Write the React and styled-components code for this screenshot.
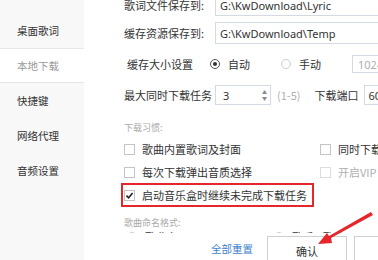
import React from "react";
import styled, { createGlobalStyle } from "styled-components";

const Global = createGlobalStyle`
  html, body { margin: 0; padding: 0; background: #fff; }
  body { width: 378px; height: 260px; overflow: hidden; font-family: "Noto Sans CJK SC", "Noto Sans", sans-serif; }
  #root { width: 378px; height: 260px; }
`;

const Page = styled.div`
  position: relative;
  display: flex;
  width: 378px;
  height: 260px;
  overflow: hidden;
  color: #333;
  font-size: 11px;
`;

const Sidebar = styled.div`
  width: 84px;
  flex: none;
  background: #f8f8f8;
  padding-top: 13px;
  box-sizing: border-box;
`;

const NavItem = styled.div`
  height: 35px;
  box-sizing: border-box;
  display: flex;
  align-items: center;
  padding-left: 17px;
  font-size: 10.5px;
  color: ${(p) => (p.$active ? "#9a9a9a" : "#333")};
  background: ${(p) => (p.$active ? "#fff" : "transparent")};
  border-top: 1px solid ${(p) => (p.$active ? "#e6e6e6" : "transparent")};
  border-bottom: 1px solid ${(p) => (p.$active ? "#e6e6e6" : "transparent")};
`;

const Main = styled.div`
  flex: 1;
  display: flex;
  flex-direction: column;
  min-width: 0;
`;

const Scroll = styled.div`
  height: 233px;
  overflow: hidden;
  flex: none;
`;

const Content = styled.div`
  margin-top: -6px;
  padding-left: 40px;
  display: flex;
  flex-direction: column;
`;

const Row = styled.div`
  display: flex;
  align-items: center;
  height: ${(p) => p.$h || 22}px;
  margin-top: ${(p) => p.$mt || 0}px;
  white-space: nowrap;
`;

const Label = styled.div`
  width: ${(p) => p.$w || 91}px;
  flex: none;
  padding-left: ${(p) => p.$indent || 0}px;
  box-sizing: border-box;
`;

const TextInput = styled.div`
  flex: none;
  width: ${(p) => p.$w}px;
  height: ${(p) => p.$h || 22}px;
  border: 1px solid #d3dae3;
  box-sizing: border-box;
  display: flex;
  align-items: center;
  padding-left: ${(p) => p.$pl || 4}px;
  color: ${(p) => (p.$muted ? "#b0b0b0" : "#333")};
  font-family: "Noto Sans", "Noto Sans CJK SC", sans-serif;
  font-size: 11px;
  position: relative;
  margin-left: ${(p) => p.$ml || 0}px;
`;

const Spin = styled.div`
  position: absolute;
  right: 3px;
  top: 3px;
  bottom: 3px;
  display: flex;
  flex-direction: column;
  justify-content: space-between;
  color: #888;
  font-size: 5px;
  line-height: 6px;
`;

const Radio = styled.span`
  width: 10px;
  height: 10px;
  border-radius: 50%;
  border: 1px solid ${(p) => (p.$on ? "#555" : "#ccc")};
  box-sizing: border-box;
  display: inline-flex;
  align-items: center;
  justify-content: center;
  flex: none;
  margin-left: ${(p) => p.$ml || 0}px;
  margin-right: ${(p) => p.$mr || 8}px;
  &::after {
    content: "";
    width: 4px;
    height: 4px;
    border-radius: 50%;
    background: ${(p) => (p.$on ? "#333" : "transparent")};
  }
`;

const OptText = styled.span`
  color: ${(p) => (p.$muted ? "#b0b0b0" : "#333")};
  margin-left: ${(p) => p.$ml || 0}px;
`;

const Section = styled.div`
  font-size: 9px;
  color: #aaa;
  height: 16px;
  display: flex;
  align-items: center;
  margin-top: ${(p) => p.$mt || 0}px;
`;

const CheckGrid = styled.div`
  display: grid;
  grid-template-columns: 196px auto;
  row-gap: 5px;
  margin-top: 5px;
`;

const CheckRow = styled.div`
  display: inline-flex;
  align-items: center;
  height: 18px;
  white-space: nowrap;
  justify-self: start;
  padding-right: ${(p) => (p.$hl ? 4 : 0)}px;
  outline: ${(p) => (p.$hl ? "2px solid #e5262a" : "none")};
  outline-offset: 1px;
  color: ${(p) => (p.$muted ? "#b0b0b0" : "#333")};
`;

const Box = styled.span`
  width: 11px;
  height: 11px;
  border: 1px solid ${(p) => (p.$muted ? "#ddd" : "#c4c4c4")};
  box-sizing: border-box;
  flex: none;
  margin-right: 7px;
  display: flex;
  align-items: center;
  justify-content: center;
  background: #fff;
`;

const Footer = styled.div`
  flex: 1;
  display: flex;
  align-items: flex-start;
  padding-top: 3px;
  padding-left: 127px;
  white-space: nowrap;
`;

const LinkText = styled.span`
  color: #3f7fd0;
  font-size: 10.5px;
  margin-top: 5px;
`;

const Button = styled.div`
  flex: none;
  width: 80px;
  height: 30px;
  border: 1px solid #cfcfcf;
  box-sizing: border-box;
  display: flex;
  align-items: center;
  justify-content: center;
  margin-left: ${(p) => p.$ml || 0}px;
  background: #fff;
  font-size: 11px;
  color: #333;
`;

const Arrow = styled.svg`
  position: absolute;
  left: 0;
  top: 0;
  pointer-events: none;
`;

const Check = () => (
  <svg width="9" height="9" viewBox="0 0 9 9">
    <path d="M1.5 4.6 L3.6 6.7 L7.6 2" fill="none" stroke="#222" strokeWidth="1.6" />
  </svg>
);

export default function App() {
  const nav = ["桌面歌词", "本地下载", "快捷键", "网络代理", "音频设置"];
  return (
    <>
      <Global />
      <Page>
        <Sidebar>
          {nav.map((n) => (
            <NavItem key={n} $active={n === "本地下载"}>
              {n}
            </NavItem>
          ))}
        </Sidebar>
        <Main>
          <Scroll>
            <Content>
              <Row>
                <Label>歌词文件保存到:</Label>
                <TextInput $w={170}>G:\KwDownload\Lyric</TextInput>
              </Row>
              <Row $mt={6}>
                <Label>缓存资源保存到:</Label>
                <TextInput $w={170}>G:\KwDownload\Temp</TextInput>
              </Row>
              <Row $mt={10} $h={20}>
                <Label $indent={3} $w={86}>缓存大小设置</Label>
                <Radio $on $mr={8} />
                <OptText>自动</OptText>
                <Radio $ml={31} $mr={8} />
                <OptText>手动</OptText>
                <TextInput $w={40} $h={18} $muted $ml={31} $pl={5}>1024</TextInput>
              </Row>
              <Row $mt={11} $h={20}>
                <Label>最大同时下载任务</Label>
                <TextInput $w={56} $h={20} $pl={7}>
                  3
                  <Spin>
                    <span>▲</span>
                    <span>▼</span>
                  </Spin>
                </TextInput>
                <OptText $muted $ml={6}>(1-5)</OptText>
                <OptText $ml={14}>下载端口</OptText>
                <TextInput $w={30} $h={20} $ml={6} $pl={3}>6000</TextInput>
              </Row>
              <Section $mt={14}>下载习惯:</Section>
              <CheckGrid>
                <CheckRow>
                  <Box />
                  歌曲内置歌词及封面
                </CheckRow>
                <CheckRow>
                  <Box />
                  同时下载歌词
                </CheckRow>
                <CheckRow>
                  <Box />
                  每次下载弹出音质选择
                </CheckRow>
                <CheckRow $muted>
                  <Box $muted />
                  开启VIP
                </CheckRow>
                <CheckRow $hl>
                  <Box>
                    <Check />
                  </Box>
                  启动音乐盒时继续未完成下载任务
                </CheckRow>
              </CheckGrid>
              <Section $mt={10}>歌曲命名格式:</Section>
              <Row $mt={-2} $h={18}>
                <Radio $ml={3} $mr={8} />
                <OptText>歌曲名</OptText>
                <Radio $ml={96} $mr={8} />
                <OptText>歌手 - 歌曲</OptText>
              </Row>
            </Content>
          </Scroll>
          <Footer>
            <LinkText>全部重置</LinkText>
            <Button $ml={14}>确认</Button>
            <Button $ml={7}>取消</Button>
          </Footer>
        </Main>
        <Arrow width="378" height="260" viewBox="0 0 378 260">
          <polygon points="371,212 373,215 331,238 332,243 318,244 327,233 329,236" fill="#e5262a" />
        </Arrow>
      </Page>
    </>
  );
}
